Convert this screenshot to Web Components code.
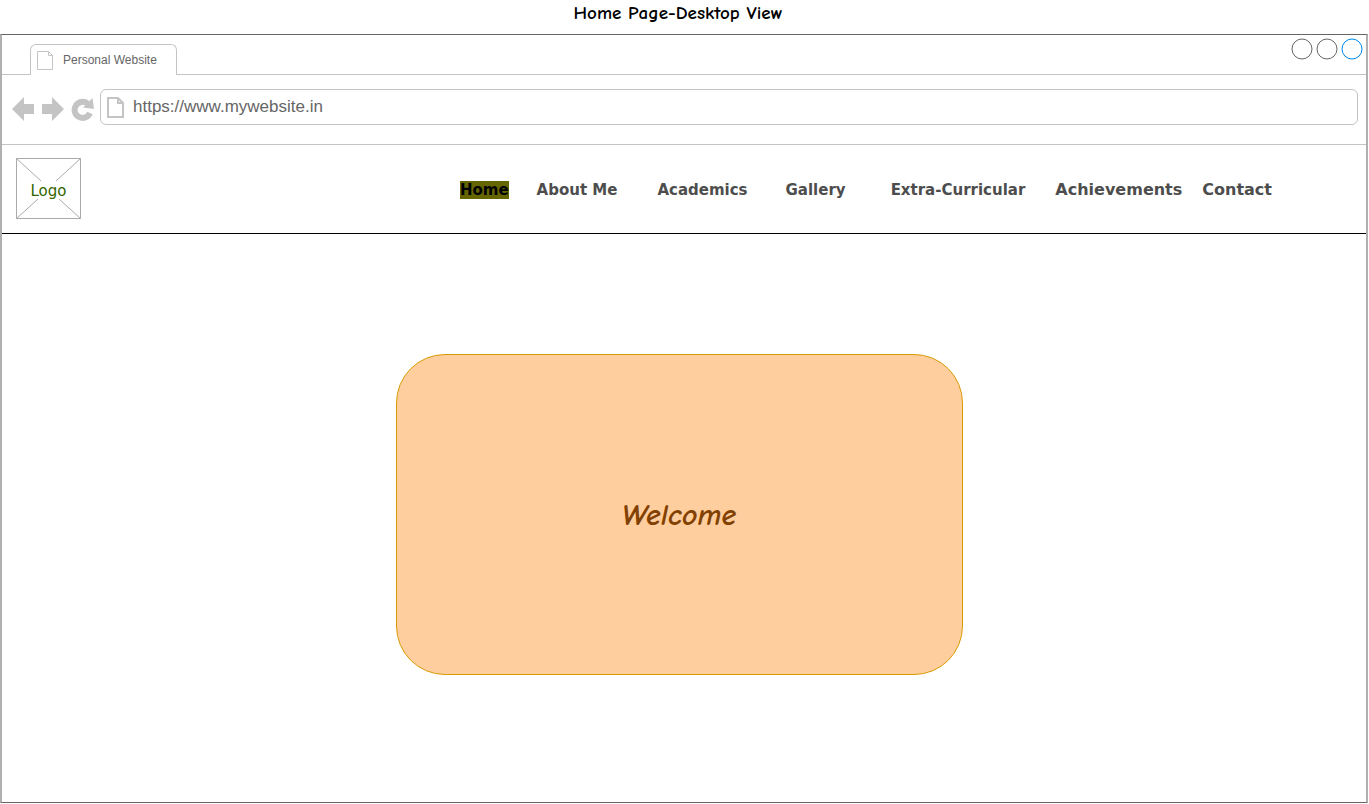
<!DOCTYPE html>
<html lang="en">
<head>
<meta charset="utf-8">
<meta name="viewport" content="width=device-width, initial-scale=1">
<title>Home Page-Desktop View</title>
<style>
  body { margin: 0; background: #fff; }
</style>
</head>
<body>
<wire-page>
  <span slot="title">Home Page-Desktop View</span>
  <browser-frame tab="Personal Website" url="https://www.mywebsite.in">
    <site-header>
      <logo-box slot="logo">Logo</logo-box>
      <nav-link current>Home</nav-link>
      <nav-link style="--gap:28px">About Me</nav-link>
      <nav-link style="--gap:40px">Academics</nav-link>
      <nav-link style="--gap:38px">Gallery</nav-link>
      <nav-link style="--gap:45px">Extra-Curricular</nav-link>
      <nav-link large style="--gap:30px">Achievements</nav-link>
      <nav-link large style="--gap:20px">Contact</nav-link>
    </site-header>
    <welcome-panel>Welcome</welcome-panel>
  </browser-frame>
</wire-page>

<script>
const define = (name, html, setup) => {
  const template = document.createElement('template');
  template.innerHTML = html;
  customElements.define(name, class extends HTMLElement {
    constructor() {
      super();
      this.attachShadow({ mode: 'open' }).append(template.content.cloneNode(true));
    }
    connectedCallback() { if (setup) setup(this, this.shadowRoot); }
  });
};

define('wire-page', `
  <style>
    :host { display: flex; flex-direction: column; box-sizing: border-box; min-height: 100vh; padding: 0 1px 1px 0; }
    h1 { margin: 0; height: 34px; padding-right: 12px; text-align: center; color: #000;
         font: bold 19px/26px "Comic Sans MS", "Comic Neue", "Open Sans", sans-serif; }
    ::slotted(browser-frame) { flex: 1; }
  </style>
  <h1><slot name="title"></slot></h1>
  <slot></slot>`);

define('browser-frame', `
  <style>
    :host { display: flex; flex-direction: column; border: solid #666; border-width: 1px 2px; border-left-color: #b0b0b0; border-right-color: #b0b0b0;
            font-family: "Liberation Sans", Arial, sans-serif; color: #666; }
    .strip { display: flex; justify-content: space-between; height: 39px; border-bottom: 1px solid #c4c4c4; }
    .tab { align-self: flex-end; box-sizing: border-box; display: flex; align-items: center; gap: 9px;
           width: 147px; height: 31px; margin: 0 0 -1px 28px; padding: 0 0 0 6px; border: 1px solid #c4c4c4;
           border-bottom: 0; border-radius: 6px 6px 0 0; background: #fff; font-size: 12px; line-height: 16px; }
    .tab span { white-space: nowrap; }
    .controls { display: flex; gap: 3px; padding: 3px 3px 0 0; }
    .controls button { width: 22px; height: 22px; padding: 0; border: 0; background: none; }
    svg { display: block; }
    .bar { display: flex; align-items: center; height: 69px; padding: 0 8px 0 9px; border-bottom: 1px solid #c4c4c4; }
    .tool { flex: none; padding: 0; border: 0; margin: 0 6px 2px 0; background: none; }
    .address { flex: 1; box-sizing: border-box; display: flex; align-items: center; gap: 8px; height: 36px;
               margin: 0 0 5px -1px; padding: 0 6px; border: 1px solid #c4c4c4; border-radius: 6px; }
    input { flex: 1; min-width: 0; height: 24px; padding: 0; border: 0; outline: 0; background: none; color: #666;
            font: 17px/24px "Liberation Sans", Arial, sans-serif; }
    main { flex: 1; display: flex; flex-direction: column; }
  </style>
  <div class="strip">
    <div class="tab">
      <svg width="17" height="19" fill="none" stroke="#c4c4c4" aria-hidden="true"><path d="M.5.5h11l4 4v14H.5zM11.5.5v4h4"/></svg>
      <span></span>
    </div>
    <div class="controls">
      <button aria-label="Minimize"><svg width="22" height="22"><circle cx="11" cy="11" r="10" fill="none" stroke="#666"/></svg></button>
      <button aria-label="Maximize"><svg width="22" height="22"><circle cx="11" cy="11" r="10" fill="none" stroke="#666"/></svg></button>
      <button aria-label="Close"><svg width="22" height="22"><circle cx="11" cy="11" r="10" fill="none" stroke="#08e"/></svg></button>
    </div>
  </div>
  <div class="bar">
    <button class="tool" aria-label="Back"><svg width="24" height="26" fill="#c4c4c4"><path d="M1 13 13 1v7h10v10H13v7z"/></svg></button>
    <button class="tool" aria-label="Forward"><svg width="24" height="26" fill="#c4c4c4"><path d="M23 13 11 1v7H1v10h10v7z"/></svg></button>
    <button class="tool" aria-label="Reload"><svg width="24" height="26"><path d="M16.500 7.500A8 8 0 1 0 19 17" fill="none" stroke="#c4c4c4" stroke-width="6"/><path d="M21.500 2l1.500 11-11-1.500z" fill="#c4c4c4"/></svg></button>
    <div class="address">
      <svg width="18" height="21" fill="none" stroke="#c4c4c4" stroke-width="2" aria-hidden="true"><path d="M1 1h10l5 5v14H1zM11 1v5h5"/></svg>
      <input type="text" aria-label="Address" spellcheck="false">
    </div>
  </div>
  <main><slot></slot></main>`,
  (host, root) => {
    root.querySelector('.tab span').textContent = host.getAttribute('tab');
    root.querySelector('input').value = host.getAttribute('url');
  });

define('site-header', `
  <style>
    :host { display: flex; align-items: center; justify-content: space-between; height: 88px; padding: 0 94px 0 14px;
            border-bottom: 1px solid #000; }
    nav { display: flex; align-items: center; padding-top: 2px; }
    ::slotted(logo-box) { margin-bottom: 2px; }
  </style>
  <slot name="logo"></slot>
  <nav aria-label="Main"><slot></slot></nav>`);

define('logo-box', `
  <style>
    :host { display: grid; place-items: center; width: 65px; height: 61px;
            font: 15px/20px "DejaVu Sans", Verdana, sans-serif; color: #360; }
    svg, span { grid-area: 1 / 1; }
    span { padding-top: 6px; }
  </style>
  <svg width="65" height="61" fill="none" stroke="#aaa" aria-hidden="true"><path d="M.5.5h64v60H.5zM.500.500 25 23M64.500.500 40 23M.500 60.500 22 41M64.500 60.500 43 41"/></svg>
  <span><slot></slot></span>`);

define('nav-link', `
  <style>
    :host { display: block; margin-left: var(--gap, 0); font: bold 15px/18px "DejaVu Sans", Verdana, sans-serif; }
    :host([large]) { font-size: 16px; }
    a { display: block; color: #4d4d4d; text-decoration: none; white-space: nowrap; }
    :host([current]) a { background: #660; color: #000; }
  </style>
  <a href="#"><slot></slot></a>`,
  (host, root) => {
    if (host.hasAttribute('current')) root.querySelector('a').setAttribute('aria-current', 'page');
  });

define('welcome-panel', `
  <style>
    :host { flex: 1; display: flex; align-items: center; justify-content: center; padding: 0 10px 8px 0; }
    section { box-sizing: border-box; display: grid; place-items: center; width: 567px; max-width: 90%; height: 321px;
              border: 1px solid #d79b00; border-radius: 49px; background: #ffce9f; }
    h2 { margin: 0; padding-top: 4px; color: #824100; font: italic bold 30px/36px "Comic Sans MS", "Comic Neue", "Open Sans", sans-serif; }
  </style>
  <section><h2><slot></slot></h2></section>`);
</script>
</body>
</html>
